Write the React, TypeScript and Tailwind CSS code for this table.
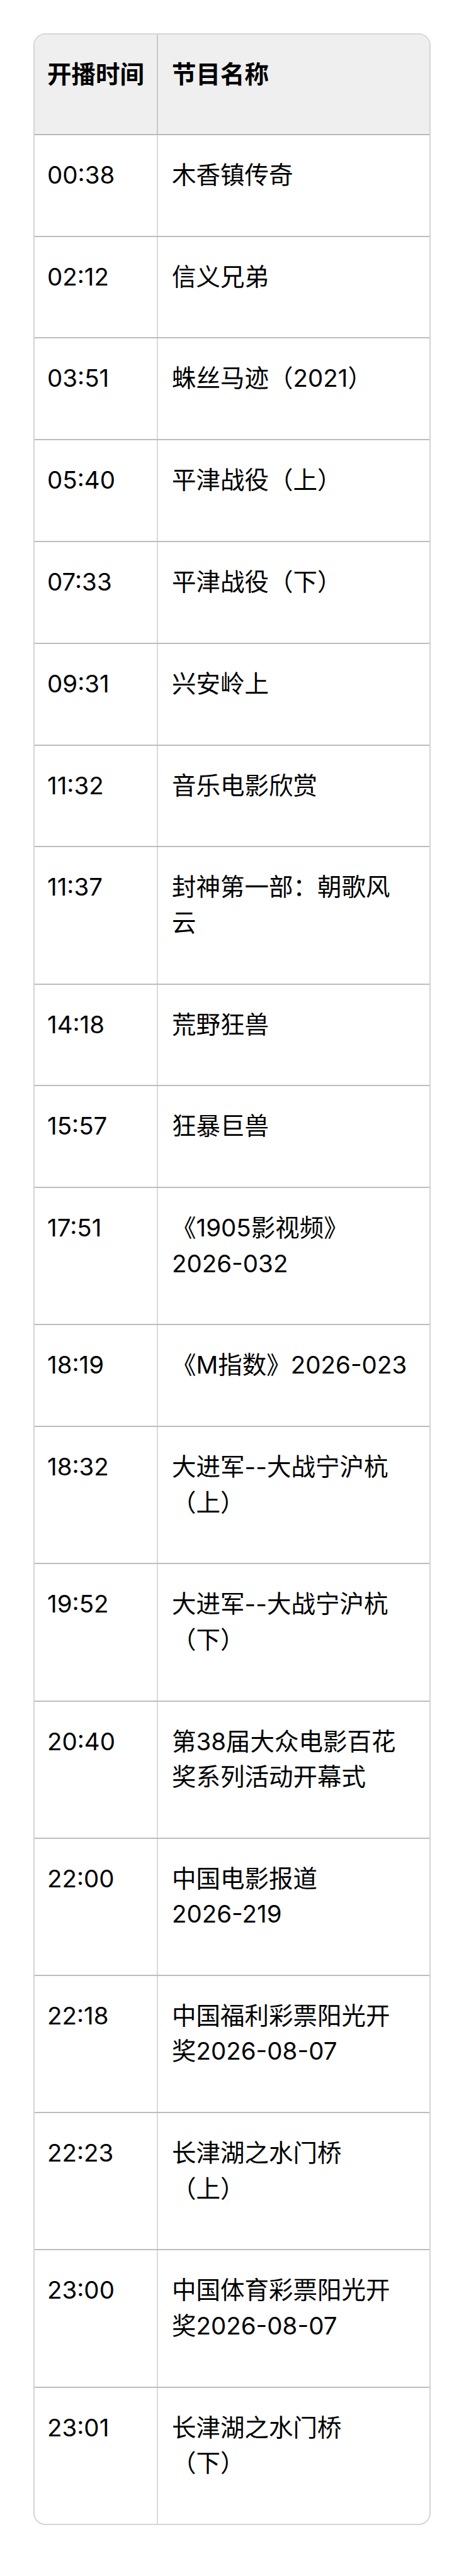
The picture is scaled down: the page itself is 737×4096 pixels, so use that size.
import React from "react";

const rows: [string, string[]][] = [
  ["00:38", ["木香镇传奇"]],
  ["02:12", ["信义兄弟"]],
  ["03:51", ["蛛丝马迹（2021）"]],
  ["05:40", ["平津战役（上）"]],
  ["07:33", ["平津战役（下）"]],
  ["09:31", ["兴安岭上"]],
  ["11:32", ["音乐电影欣赏"]],
  ["11:37", ["封神第一部：朝歌风", "云"]],
  ["14:18", ["荒野狂兽"]],
  ["15:57", ["狂暴巨兽"]],
  ["17:51", ["《1905影视频》", "2026-032"]],
  ["18:19", ["《M指数》2026-023"]],
  ["18:32", ["大进军--大战宁沪杭", "（上）"]],
  ["19:52", ["大进军--大战宁沪杭", "（下）"]],
  ["20:40", ["第38届大众电影百花", "奖系列活动开幕式"]],
  ["22:00", ["中国电影报道", "2026-219"]],
  ["22:18", ["中国福利彩票阳光开", "奖2026-08-07"]],
  ["22:23", ["长津湖之水门桥", "（上）"]],
  ["23:00", ["中国体育彩票阳光开", "奖2026-08-07"]],
  ["23:01", ["长津湖之水门桥", "（下）"]],
];

export default function App() {
  return (
    <div className="min-h-screen bg-white px-[53px] pt-[53px] pb-[76px] font-['Inter','Noto_Sans_CJK_SC',sans-serif] text-black">
      <div className="overflow-hidden rounded-[19px] border-2 border-[#d5d5d5]">
        <div className="grid grid-cols-[196px_1fr] border-b-2 border-[#b9b9b9] bg-[#efefef]">
          <div className="whitespace-nowrap border-r-2 border-[#c9c9c9] pl-[20px] pt-[35px] pb-[66.4px] text-[38.5px] font-semibold leading-[56.4px]">
            开播时间
          </div>
          <div className="whitespace-nowrap pl-[22px] pt-[35px] pb-[66.4px] text-[38.5px] font-semibold leading-[56.4px]">
            节目名称
          </div>
        </div>
        {rows.map(([time, lines], i) => (
          <div
            key={time + i}
            className={
              i === rows.length - 1
                ? "grid grid-cols-[196px_1fr]"
                : "grid grid-cols-[196px_1fr] border-b-2 border-[#bdbdbd]"
            }
          >
            <div className="whitespace-nowrap border-r-2 border-[#dadada] pl-[20px] pt-[35px] pb-[68.4px] text-[38.5px] leading-[56.4px]">
              {time}
            </div>
            <div className="pl-[22px] pr-[20px] pt-[35px] pb-[68.4px] text-[38.5px] leading-[56.4px]">
              {lines.map((l, j) => (
                <div key={j} className="whitespace-nowrap">
                  {l}
                </div>
              ))}
            </div>
          </div>
        ))}
      </div>
    </div>
  );
}
